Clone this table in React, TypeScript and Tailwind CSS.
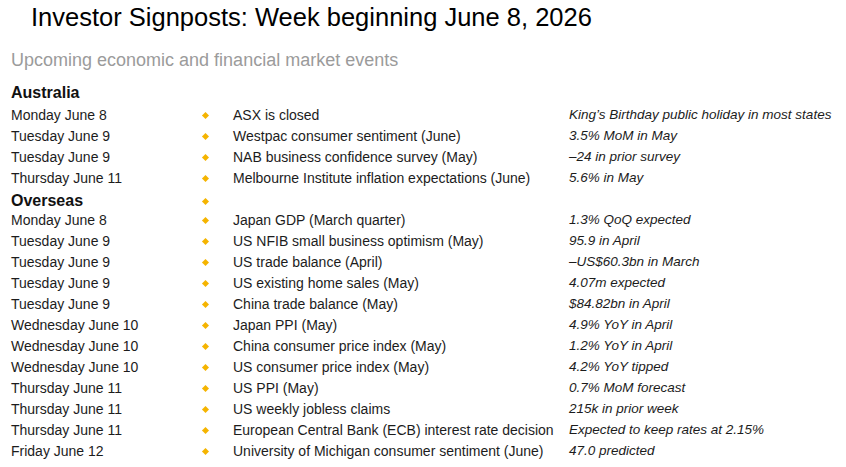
const australia = [
  ["Monday June 8", "ASX is closed", "King\u2019s Birthday public holiday in most states"],
  ["Tuesday June 9", "Westpac consumer sentiment (June)", "3.5% MoM in May"],
  ["Tuesday June 9", "NAB business confidence survey (May)", "\u201324 in prior survey"],
  ["Thursday June 11", "Melbourne Institute inflation expectations (June)", "5.6% in May"],
];

const overseas = [
  ["Monday June 8", "Japan GDP (March quarter)", "1.3% QoQ expected"],
  ["Tuesday June 9", "US NFIB small business optimism (May)", "95.9 in April"],
  ["Tuesday June 9", "US trade balance (April)", "\u2013US$60.3bn in March"],
  ["Tuesday June 9", "US existing home sales (May)", "4.07m expected"],
  ["Tuesday June 9", "China trade balance (May)", "$84.82bn in April"],
  ["Wednesday June 10", "Japan PPI (May)", "4.9% YoY in April"],
  ["Wednesday June 10", "China consumer price index (May)", "1.2% YoY in April"],
  ["Wednesday June 10", "US consumer price index (May)", "4.2% YoY tipped"],
  ["Thursday June 11", "US PPI (May)", "0.7% MoM forecast"],
  ["Thursday June 11", "US weekly jobless claims", "215k in prior week"],
  ["Thursday June 11", "European Central Bank (ECB) interest rate decision", "Expected to keep rates at 2.15%"],
  ["Friday June 12", "University of Michigan consumer sentiment (June)", "47.0 predicted"],
];

function Bullet() {
  return <span className="block w-[5px] h-[5px] rotate-45 bg-[#f5b400] ml-[8px]" />;
}

function Row({ date, event, note }: { date: string; event: string; note: string }) {
  return (
    <div className="grid grid-cols-[184px_38px_336px_1fr] items-center h-[21px] text-[14px] text-[#1c1c1c]">
      <span>{date}</span>
      <Bullet />
      <span>{event}</span>
      <span className="italic text-[13.5px]">{note}</span>
    </div>
  );
}

export default function App() {
  return (
    <div
      className="w-[846px] h-[467px] bg-white overflow-hidden"
      style={{ fontFamily: '"Liberation Sans", Arial, sans-serif' }}
    >
      <h1 className="pl-[31px] pt-[2px] text-[25.5px] leading-[30px] text-black">
        Investor Signposts: Week beginning June 8, 2026
      </h1>
      <p className="pl-[11px] mt-[17px] text-[18px] leading-[22px] text-[#9b9b9b]">
        Upcoming economic and financial market events
      </p>
      <div className="pl-[11px] mt-[9px]">
        <div className="h-[25px] flex items-center text-[16px] font-semibold text-[#111]">Australia</div>
        {australia.map((r, i) => (
          <Row key={i} date={r[0]} event={r[1]} note={r[2]} />
        ))}
        <div className="grid grid-cols-[184px_38px_336px_1fr] items-center h-[21px]">
          <span className="text-[16px] font-semibold text-[#111]">Overseas</span>
          <Bullet />
        </div>
        {overseas.map((r, i) => (
          <Row key={i} date={r[0]} event={r[1]} note={r[2]} />
        ))}
      </div>
    </div>
  );
}
